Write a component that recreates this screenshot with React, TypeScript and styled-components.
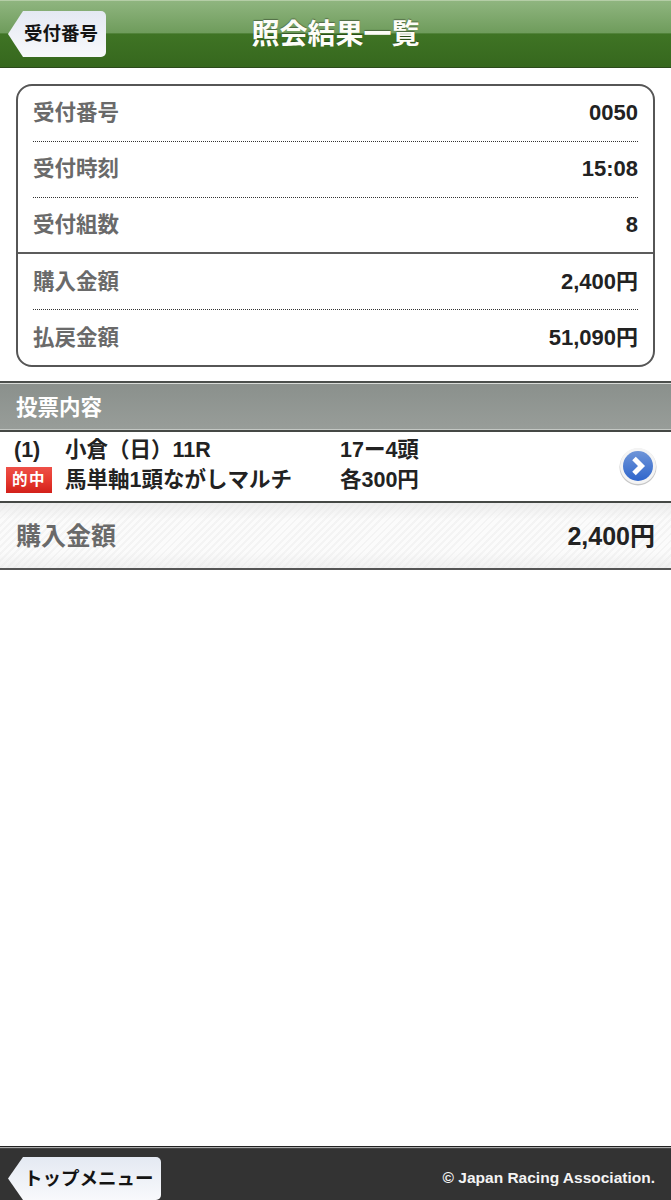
import React from "react";
import styled, { createGlobalStyle } from "styled-components";

const GlobalStyle = createGlobalStyle`
    html, body {
        margin: 0;
        padding: 0;
        background: #fff;
    }
    body {
        font-family: "Liberation Sans", "Noto Sans CJK JP", sans-serif;
        font-weight: 700;
    }
`;

const Page = styled.div`
    width: 671px;
    height: 1200px;
    display: flex;
    flex-direction: column;
    overflow: hidden;
    background: #fff;
`;

const Header = styled.header`
    height: 68px;
    box-sizing: border-box;
    flex: none;
    position: relative;
    display: flex;
    align-items: center;
    justify-content: center;
    border-top: 1px solid #b4cda6;
    border-bottom: 1px solid #2c4a1c;
    background: linear-gradient(to bottom, #8fb57f 0%, #6f9c5c 48%, #3f7424 50%, #36671e 100%);
`;

const Title = styled.h1`
    margin: 1px 0 0 0;
    font-size: 28px;
    line-height: 36px;
    font-weight: 700;
    color: #fdfdf8;
    text-shadow: 0 -1px 1px rgba(0, 0, 0, .35);
`;

// pentagon shaped back button, used in the header and the footer
const BackButton = styled.div<{ $width: number, $height: number, $size: number }>`
    position: absolute;
    left: 8px;
    top: 10px;
    width: ${props => props.$width}px;
    height: ${props => props.$height}px;
    box-sizing: border-box;
    padding-left: 16px;
    display: flex;
    align-items: center;
    font-size: ${props => props.$size}px;
    line-height: 24px;
    color: #141414;
    white-space: nowrap;
    border-radius: 0 5px 5px 0;
    background: linear-gradient(to bottom, #e4e9f2 0%, #f8f9fc 100%);
    clip-path: polygon(15px 0, 100% 0, 100% 100%, 15px 100%, 0 50%);
`;

const Card = styled.section`
    margin: 16px 16px 0 16px;
    box-sizing: border-box;
    height: 283px;
    border: 2px solid #565656;
    border-radius: 16px;
    display: flex;
    flex-direction: column;
`;

const CardRow = styled.div<{ $line?: "dotted" | "solid" }>`
    flex: 1;
    margin: 0 ${props => props.$line === "solid" ? "0" : "15px"};
    padding: ${props => props.$line === "solid" ? "0 15px" : "0"};
    display: flex;
    align-items: center;
    justify-content: space-between;
    line-height: 30px;
    border-bottom: ${props =>
        props.$line === "solid" ? "2px solid #5c5c5c" :
        props.$line === "dotted" ? "1px dotted #333" : "none"};
`;

const CardLabel = styled.span`
    font-size: 21.5px;
    color: #6a6a6a;
`;

const CardValue = styled.span`
    font-size: 22px;
    color: #222;
`;

const SectionHead = styled.div`
    margin-top: 14px;
    height: 51px;
    box-sizing: border-box;
    flex: none;
    display: flex;
    align-items: center;
    padding: 0 16px 2px;
    font-size: 21.5px;
    color: #fff;
    border-top: 2px solid #4b4f4c;
    border-bottom: 2px solid #454845;
    box-shadow: inset 0 1px 0 #d8dbd8, inset 0 -1px 0 #c4c8c4;
    background: linear-gradient(to bottom, #8a908c 0%, #989d99 100%);
`;

const BetRow = styled.div`
    height: 69px;
    box-sizing: border-box;
    flex: none;
    position: relative;
    display: grid;
    grid-template-columns: 65px 275px 1fr;
    grid-template-rows: 30px 30px;
    align-content: start;
    padding-top: 3px;
    font-size: 21.5px;
    line-height: 30px;
    color: #222;
    white-space: nowrap;
`;

const Num = styled.span`
    padding-left: 14px;
`;

const BadgeCell = styled.span`
    display: flex;
    align-items: center;
    padding-left: 6px;
`;

const HitBadge = styled.span`
    width: 46px;
    height: 26px;
    display: flex;
    align-items: center;
    justify-content: center;
    font-size: 15.5px;
    letter-spacing: 1.5px;
    color: #fff;
    background: linear-gradient(to bottom, #ee5048 0%, #e63a30 50%, #d3201a 100%);
`;

const ArrowIcon = styled.svg`
    position: absolute;
    right: 13px;
    top: 14px;
    width: 40px;
    height: 40px;
`;

const Total = styled.div`
    height: 69px;
    box-sizing: border-box;
    flex: none;
    display: flex;
    align-items: center;
    justify-content: space-between;
    padding: 0 16px;
    line-height: 34px;
    border-top: 2px solid #454845;
    border-bottom: 2px solid #555;
    background:
        repeating-linear-gradient(135deg, rgba(230, 230, 230, .35) 0 2px, rgba(255, 255, 255, 0) 2px 5px),
        linear-gradient(to bottom, #ececec 0%, #fbfbfb 25%, #fbfbfb 75%, #f1f1f1 100%);
`;

const TotalLabel = styled.span`
    font-size: 25px;
    color: #6a6a6a;
`;

const TotalValue = styled.span`
    font-size: 25px;
    color: #222;
`;

const Spacer = styled.div`
    flex: 1;
`;

const Footer = styled.footer`
    height: 54px;
    box-sizing: border-box;
    flex: none;
    position: relative;
    display: flex;
    align-items: center;
    justify-content: flex-end;
    padding: 9px 16px 0 0;
    border-top: 1px solid #222;
    box-shadow: inset 0 1px 0 #aaa, inset 0 2px 0 #444;
    background: #333;
`;

const Copyright = styled.span`
    font-size: 15.5px;
    color: #f4f4f4;
`;

const App = () => (
    <Page>
        <GlobalStyle />
        <Header>
            <BackButton $width={98} $height={46} $size={18.5}>受付番号</BackButton>
            <Title>照会結果一覧</Title>
        </Header>
        <Card>
            <CardRow $line="dotted"><CardLabel>受付番号</CardLabel><CardValue>0050</CardValue></CardRow>
            <CardRow $line="dotted"><CardLabel>受付時刻</CardLabel><CardValue>15:08</CardValue></CardRow>
            <CardRow $line="solid"><CardLabel>受付組数</CardLabel><CardValue>8</CardValue></CardRow>
            <CardRow $line="dotted"><CardLabel>購入金額</CardLabel><CardValue>2,400円</CardValue></CardRow>
            <CardRow><CardLabel>払戻金額</CardLabel><CardValue>51,090円</CardValue></CardRow>
        </Card>
        <SectionHead>投票内容</SectionHead>
        <BetRow>
            <Num>(1)</Num>
            <span>小倉（日）11R</span>
            <span>17ー4頭</span>
            <BadgeCell><HitBadge>的中</HitBadge></BadgeCell>
            <span>馬単軸1頭ながしマルチ</span>
            <span>各300円</span>
            <ArrowIcon viewBox="0 0 40 40">
                <defs>
                    <linearGradient id="arrowFill" x1="0" y1="0" x2="0" y2="1">
                        <stop offset="0" stopColor="#6f95d8" />
                        <stop offset="1" stopColor="#2f66cc" />
                    </linearGradient>
                </defs>
                <circle cx="20" cy="21" r="18.5" fill="#000" opacity=".22" />
                <circle cx="20" cy="20" r="18" fill="#f4f4f4" />
                <circle cx="20" cy="20" r="15" fill="url(#arrowFill)" />
                <path d="M16 12.5 L23.5 20 L16 27.5" fill="none" stroke="#fff" strokeWidth="5" />
            </ArrowIcon>
        </BetRow>
        <Total>
            <TotalLabel>購入金額</TotalLabel>
            <TotalValue>2,400円</TotalValue>
        </Total>
        <Spacer />
        <Footer>
            <BackButton $width={153} $height={43} $size={18.5}>トップメニュー</BackButton>
            <Copyright>© Japan Racing Association.</Copyright>
        </Footer>
    </Page>
);

export default App;
